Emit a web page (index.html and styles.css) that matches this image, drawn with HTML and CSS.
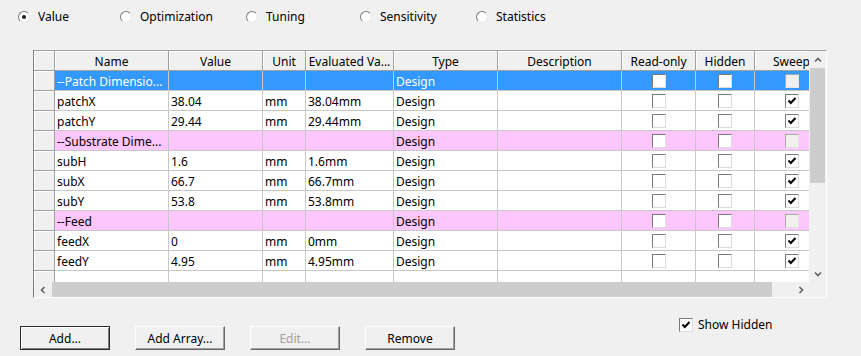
FILE: index.html
```html
<!DOCTYPE html>
<html lang="en">

<head>
    <meta charset="UTF-8">
    <meta name="viewport" content="width=device-width, initial-scale=1.0">
    <title>Design Properties</title>

    <link rel="stylesheet" href="styles.css">
</head>

<body>
    <div class="radios">
        <label class="radio-item"><span class="radio checked"></span>Value</label>
        <label class="radio-item"><span class="radio"></span>Optimization</label>
        <label class="radio-item"><span class="radio"></span>Tuning</label>
        <label class="radio-item"><span class="radio"></span>Sensitivity</label>
        <label class="radio-item"><span class="radio"></span>Statistics</label>
    </div>

    <div class="grid-frame">
        <div class="grid-main">
            <div class="viewport">
                <div class="row head">
                    <div class="cell rowhead"></div>
                    <div class="cell">Name</div>
                    <div class="cell">Value</div>
                    <div class="cell">Unit</div>
                    <div class="cell">Evaluated Va...</div>
                    <div class="cell">Type</div>
                    <div class="cell">Description</div>
                    <div class="cell">Read-only</div>
                    <div class="cell">Hidden</div>
                    <div class="cell">Sweep</div>
                </div>
                <div class="row selected">
                    <div class="cell rowhead"></div>
                    <div class="cell">--Patch Dimensio...</div>
                    <div class="cell"></div>
                    <div class="cell"></div>
                    <div class="cell"></div>
                    <div class="cell">Design</div>
                    <div class="cell"></div>
                    <div class="cell box"><span class="cb"></span></div>
                    <div class="cell box"><span class="cb"></span></div>
                    <div class="cell box"><span class="cb off"></span></div>
                </div>
                <div class="row">
                    <div class="cell rowhead"></div>
                    <div class="cell">patchX</div>
                    <div class="cell">38.04</div>
                    <div class="cell">mm</div>
                    <div class="cell">38.04mm</div>
                    <div class="cell">Design</div>
                    <div class="cell"></div>
                    <div class="cell box"><span class="cb"></span></div>
                    <div class="cell box"><span class="cb"></span></div>
                    <div class="cell box"><span class="cb"><svg viewBox="0 0 12 12"><path d="M2.5 5.5 L4.8 8 L9.5 3"/></svg></span></div>
                </div>
                <div class="row">
                    <div class="cell rowhead"></div>
                    <div class="cell">patchY</div>
                    <div class="cell">29.44</div>
                    <div class="cell">mm</div>
                    <div class="cell">29.44mm</div>
                    <div class="cell">Design</div>
                    <div class="cell"></div>
                    <div class="cell box"><span class="cb"></span></div>
                    <div class="cell box"><span class="cb"></span></div>
                    <div class="cell box"><span class="cb"><svg viewBox="0 0 12 12"><path d="M2.5 5.5 L4.8 8 L9.5 3"/></svg></span></div>
                </div>
                <div class="row group">
                    <div class="cell rowhead"></div>
                    <div class="cell">--Substrate Dime...</div>
                    <div class="cell"></div>
                    <div class="cell"></div>
                    <div class="cell"></div>
                    <div class="cell">Design</div>
                    <div class="cell"></div>
                    <div class="cell box"><span class="cb"></span></div>
                    <div class="cell box"><span class="cb"></span></div>
                    <div class="cell box"><span class="cb off"></span></div>
                </div>
                <div class="row">
                    <div class="cell rowhead"></div>
                    <div class="cell">subH</div>
                    <div class="cell">1.6</div>
                    <div class="cell">mm</div>
                    <div class="cell">1.6mm</div>
                    <div class="cell">Design</div>
                    <div class="cell"></div>
                    <div class="cell box"><span class="cb"></span></div>
                    <div class="cell box"><span class="cb"></span></div>
                    <div class="cell box"><span class="cb"><svg viewBox="0 0 12 12"><path d="M2.5 5.5 L4.8 8 L9.5 3"/></svg></span></div>
                </div>
                <div class="row">
                    <div class="cell rowhead"></div>
                    <div class="cell">subX</div>
                    <div class="cell">66.7</div>
                    <div class="cell">mm</div>
                    <div class="cell">66.7mm</div>
                    <div class="cell">Design</div>
                    <div class="cell"></div>
                    <div class="cell box"><span class="cb"></span></div>
                    <div class="cell box"><span class="cb"></span></div>
                    <div class="cell box"><span class="cb"><svg viewBox="0 0 12 12"><path d="M2.5 5.5 L4.8 8 L9.5 3"/></svg></span></div>
                </div>
                <div class="row">
                    <div class="cell rowhead"></div>
                    <div class="cell">subY</div>
                    <div class="cell">53.8</div>
                    <div class="cell">mm</div>
                    <div class="cell">53.8mm</div>
                    <div class="cell">Design</div>
                    <div class="cell"></div>
                    <div class="cell box"><span class="cb"></span></div>
                    <div class="cell box"><span class="cb"></span></div>
                    <div class="cell box"><span class="cb"><svg viewBox="0 0 12 12"><path d="M2.5 5.5 L4.8 8 L9.5 3"/></svg></span></div>
                </div>
                <div class="row group">
                    <div class="cell rowhead"></div>
                    <div class="cell">--Feed</div>
                    <div class="cell"></div>
                    <div class="cell"></div>
                    <div class="cell"></div>
                    <div class="cell">Design</div>
                    <div class="cell"></div>
                    <div class="cell box"><span class="cb"></span></div>
                    <div class="cell box"><span class="cb"></span></div>
                    <div class="cell box"><span class="cb off"></span></div>
                </div>
                <div class="row">
                    <div class="cell rowhead"></div>
                    <div class="cell">feedX</div>
                    <div class="cell">0</div>
                    <div class="cell">mm</div>
                    <div class="cell">0mm</div>
                    <div class="cell">Design</div>
                    <div class="cell"></div>
                    <div class="cell box"><span class="cb"></span></div>
                    <div class="cell box"><span class="cb"></span></div>
                    <div class="cell box"><span class="cb"><svg viewBox="0 0 12 12"><path d="M2.5 5.5 L4.8 8 L9.5 3"/></svg></span></div>
                </div>
                <div class="row">
                    <div class="cell rowhead"></div>
                    <div class="cell">feedY</div>
                    <div class="cell">4.95</div>
                    <div class="cell">mm</div>
                    <div class="cell">4.95mm</div>
                    <div class="cell">Design</div>
                    <div class="cell"></div>
                    <div class="cell box"><span class="cb"></span></div>
                    <div class="cell box"><span class="cb"></span></div>
                    <div class="cell box"><span class="cb"><svg viewBox="0 0 12 12"><path d="M2.5 5.5 L4.8 8 L9.5 3"/></svg></span></div>
                </div>
                <div class="row">
                    <div class="cell rowhead"></div>
                    <div class="cell"></div>
                    <div class="cell"></div>
                    <div class="cell"></div>
                    <div class="cell"></div>
                    <div class="cell"></div>
                    <div class="cell"></div>
                    <div class="cell"></div>
                    <div class="cell"></div>
                    <div class="cell"></div>
                </div>
            </div>

            <div class="hscroll">
                <span class="arrow"><svg viewBox="0 0 8 8"><polyline points="5.5,1 2.5,4 5.5,7"/></svg></span>
                <span class="hthumb"></span>
                <span class="track"></span>
                <span class="arrow"><svg viewBox="0 0 8 8"><polyline points="2.5,1 5.5,4 2.5,7"/></svg></span>
            </div>
        </div>

        <div class="vscroll">
            <span class="arrow"><svg viewBox="0 0 8 8"><polyline points="1,5.5 4,2.5 7,5.5"/></svg></span>
            <span class="vthumb"></span>
            <span class="track"></span>
            <span class="arrow"><svg viewBox="0 0 8 8"><polyline points="1,2.5 4,5.5 7,2.5"/></svg></span>
            <span class="corner"></span>
        </div>
    </div>

    <div class="actions">
        <button class="btn default">Add...</button>
        <button class="btn">Add Array...</button>
        <button class="btn" disabled>Edit...</button>
        <button class="btn">Remove</button>

        <label class="show-hidden">
            <span class="cb"><svg viewBox="0 0 12 12"><path d="M2.5 5.5 L4.8 8 L9.5 3"/></svg></span>
            Show Hidden
        </label>
    </div>
</body>

</html>
```

FILE: styles.css
```css
* {
    box-sizing: border-box;
}

body {
    margin: 0;
    width: 861px;
    height: 356px;
    overflow: hidden;
    background-color: #f0f0f0;
    font-family: "Noto Sans", Arial, sans-serif;
    font-size: 12px;
    color: #000;
}

/* top radio row */
.radios {
    height: 50px;
    padding: 10px 0 0 18px;
    display: grid;
    grid-template-columns: 102px 126px 114px 116px auto;
    align-items: start;
}

.radio-item {
    display: flex;
    align-items: center;
    height: 13px;
    line-height: 13px;
}

.radio {
    width: 12px;
    height: 12px;
    margin-right: 8px;
    border-radius: 50%;
    background-color: #fff;
    border: 1px solid;
    border-color: #7a7a7a #e6e6e6 #e6e6e6 #7a7a7a;
    display: flex;
    justify-content: center;
    align-items: center;
}

.radio.checked::after {
    content: "";
    width: 4px;
    height: 4px;
    border-radius: 50%;
    background-color: #222;
}

/* grid */
.grid-frame {
    margin-left: 33px;
    width: 794px;
    height: 248px;
    border: 1px solid;
    border-color: #a0a0a0 #fff #fff #808080;
    display: flex;
}

.grid-main {
    width: 775px;
    display: flex;
    flex-direction: column;
}

.viewport {
    height: 231px;
    overflow: hidden;
    background-color: #fff;
}

.row {
    width: 795px;
    height: 20px;
    display: grid;
    grid-template-columns: 21px 114px 94px 43px 88px 104px 124px 74px 59px 74px;
}

.cell {
    height: 20px;
    padding: 1px 2px 0;
    line-height: 19px;
    white-space: nowrap;
    overflow: hidden;
    border-right: 1px solid #c8c8c8;
    border-bottom: 1px solid #c8c8c8;
}

.cell.rowhead,
.head .cell {
    background-color: #f0f0f0;
    border-right-color: #a0a0a0;
    border-bottom-color: #a0a0a0;
    box-shadow: inset 1px 1px #fff;
}

.head .cell {
    text-align: center;
}

.cell.box {
    padding: 0;
    display: flex;
    justify-content: center;
    align-items: center;
}

.selected .cell {
    background-color: #3399ff;
    color: #fff;
}

.group .cell {
    background-color: #fdc6fd;
}

.selected .cell.rowhead,
.group .cell.rowhead {
    background-color: #f0f0f0;
    color: #000;
}

/* checkboxes */
.cb {
    width: 14px;
    height: 14px;
    background-color: #fff;
    border: 1px solid;
    border-color: #7a7a7a #dcdcdc #dcdcdc #7a7a7a;
    display: flex;
    justify-content: center;
    align-items: center;
}

.cb.off {
    background-color: #f0f0f0;
    border-color: #a8a8a8 #e4e4e4 #e4e4e4 #a8a8a8;
}

.cb svg {
    width: 12px;
    height: 12px;
}

.cb path {
    fill: none;
    stroke: #000;
    stroke-width: 2;
}

/* scrollbars */
.hscroll {
    height: 15px;
    display: flex;
    background-color: #f0f0f0;
}

.vscroll {
    width: 17px;
    display: flex;
    flex-direction: column;
    background-color: #f0f0f0;
}

.arrow {
    flex: none;
    width: 17px;
    height: 17px;
    display: flex;
    justify-content: center;
    align-items: center;
}

.hscroll .arrow {
    height: 15px;
}

.arrow svg {
    width: 8px;
    height: 8px;
}

.arrow polyline {
    fill: none;
    stroke: #606060;
    stroke-width: 1.6;
}

.track {
    flex: 1;
}

.hthumb {
    width: 720px;
    margin: 0 0 0 1px;
    background-color: #cdcdcd;
}

.vthumb {
    height: 115px;
    margin: 0 1px;
    background-color: #cdcdcd;
}

.corner {
    height: 15px;
}

/* bottom buttons */
.actions {
    display: flex;
    align-items: flex-start;
    padding-left: 20px;
}

.btn {
    width: 90px;
    height: 24px;
    margin: 28px 25px 0 0;
    padding: 0;
    font-family: inherit;
    font-size: 12px;
    color: #000;
    background-color: #f0f0f0;
    border: 1px solid;
    border-color: #fff #696969 #696969 #fff;
    box-shadow: inset -1px -1px #a0a0a0;
}

.btn.default {
    border: 1px solid #2b2b2b;
    box-shadow: inset 1px 1px #fff, inset -1px -1px #808080;
}

.btn:disabled {
    color: #a0a0a0;
}

.show-hidden {
    margin: 20px 0 0 199px;
    display: flex;
    align-items: center;
    gap: 5px;
    height: 14px;
    line-height: 14px;
}
```
